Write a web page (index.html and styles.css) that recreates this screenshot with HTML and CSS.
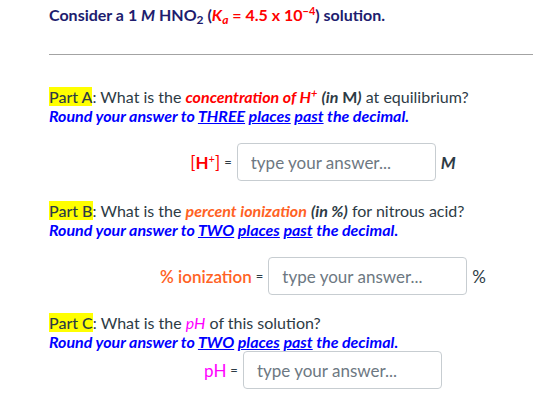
FILE: index.html
```html
<!DOCTYPE html>
<html>
<head>
<meta charset="utf-8">
<link rel="stylesheet" href="styles.css">
</head>
<body>
<div class="page">
  <p class="title">Consider a 1 <i>M</i> HNO<sub>2</sub> (<span class="red"><i>K<sub>a</sub></i> = 4.5 x 10<sup>&minus;4</sup></span>) solution.</p>
  <hr class="rule">

  <p class="q qa"><mark class="part">Part A</mark>: What is the <b class="red"><i>concentration of H<sup>+</sup></i></b> <b class="dk"><i>(in</i> M<i>)</i></b> at equilibrium?<br><b class="blue"><i>Round your answer to <u>THREE</u> <u>places</u> <u>past</u> the decimal.</i></b></p>
  <div class="row ra">
    <span class="label red-l">[<b>H</b><sup>+</sup>]</span>
    <span class="eq">=</span>
    <input class="ans" type="text" placeholder="type your answer...">
    <span class="unit unit-m">M</span>
  </div>

  <p class="q qb"><mark class="part">Part B</mark>: What is the <b class="orange"><i>percent ionization</i></b> <b class="dk"><i>(in %)</i></b> for nitrous acid?<br><b class="blue"><i>Round your answer to <u>TWO</u> <u>places</u> <u>past</u> the decimal.</i></b></p>
  <div class="row rb">
    <span class="label orange-l">% ionization</span>
    <span class="eq">=</span>
    <input class="ans" type="text" placeholder="type your answer...">
    <span class="unit">%</span>
  </div>

  <p class="q qc"><mark class="part">Part C</mark>: What is the <i class="magenta">pH</i> of this solution?<br><b class="blue"><i>Round your answer to <u>TWO</u> <u>places</u> <u>past</u> the decimal.</i></b></p>
  <div class="row rc">
    <span class="label magenta-l">pH</span>
    <span class="eq">=</span>
    <input class="ans" type="text" placeholder="type your answer...">
  </div>
</div>
</body>
</html>
```

FILE: styles.css
```css
html, body {
  margin: 0;
  padding: 0;
  overflow: hidden;
  background: #ffffff;
}
body {
  font-family: Lato, "Open Sans", sans-serif;
  color: #2d3b45;
}
.page {
  width: 484px;
  padding: 5px 0 0 49px;
}
.title {
  margin: 0;
  font-size: 16px;
  line-height: 19px;
  font-weight: 700;
  color: #201c6e;
}
.title sub, .q sub {
  font-size: 12px;
  line-height: 0;
  vertical-align: -3px;
}
.title sup, .q sup, .label sup {
  font-size: 11px;
  line-height: 0;
  vertical-align: 6px;
}
.red { color: #ff0000; }
.blue { color: #0000ff; }
.orange { color: #ff6224; }
.magenta { color: #ff00ff; }
.dk { color: #2d3b45; }
.rule {
  margin: 30px 0 0 0;
  border: 0;
  border-top: 1px solid #a3a3a3;
  height: 0;
}
.q {
  margin: 0;
  font-size: 16px;
  line-height: 19px;
}
.qa { margin-top: 32px; }
.qb { margin-top: 20px; }
.qc { margin-top: 18px; }
.part {
  background: #ffff00;
  color: #2d3b45;
  font-weight: 500;
}
.row {
  display: flex;
  justify-content: center;
  align-items: center;
  height: 38px;
  padding-left: 64px;
}
.ra, .rb { margin-top: 18px; }
.rc { margin-top: 0; }
.label {
  font-size: 17px;
  font-weight: 600;
}
.red-l { color: #ff0000; font-weight: 400; }
.red-l b { font-weight: 700; }
.orange-l { color: #ff6224; }
.magenta-l { color: #ff00ff; font-weight: 400; }
.eq {
  font-size: 13px;
  color: #2d3b45;
  margin: 0 5px 0 4px;
}
.ans {
  box-sizing: border-box;
  width: 199px;
  height: 38px;
  border: 1px solid #c7cdd1;
  border-radius: 4px;
  padding: 0 13px;
  font-family: Lato, "Open Sans", sans-serif;
  font-size: 17px;
  color: #2d3b45;
  background: #ffffff;
  outline: none;
}
.ans::placeholder {
  color: #6d7882;
  opacity: 1;
}
.unit {
  margin-left: 5px;
  font-size: 17px;
  color: #2d3b45;
}
.unit-m {
  font-style: italic;
  font-weight: 700;
}
```
